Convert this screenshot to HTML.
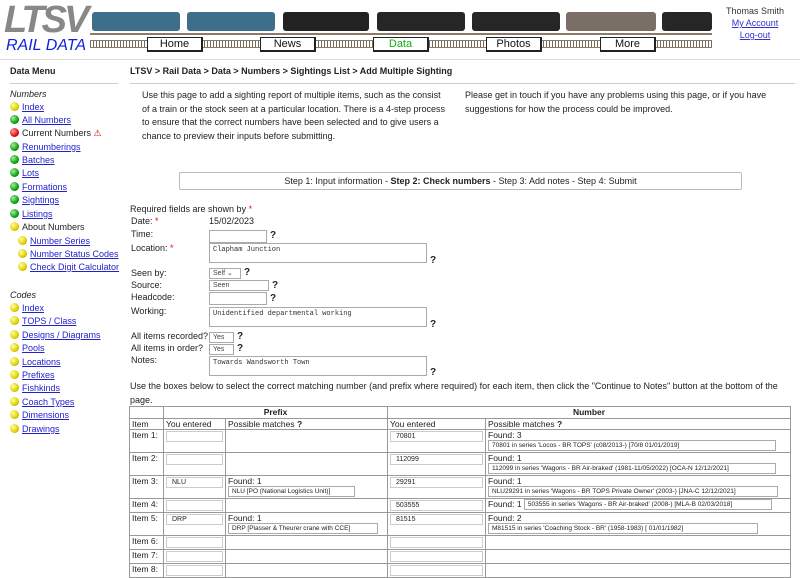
<!DOCTYPE html><html><head><meta charset="utf-8"><style>
*{box-sizing:border-box}
body{margin:0;width:800px;height:575px;overflow:hidden;background:#fff;font-family:"Liberation Sans",Arial,sans-serif;font-size:9px;color:#222;position:relative}
.a{position:absolute}
a{color:#22c}
.tab{position:absolute;top:37px;height:15px;width:56px;background:#fff;border:1px solid #222;border-right:2px solid #222;border-bottom:2px solid #222;font-size:11px;text-align:center;line-height:12px;color:#111}
.track{position:absolute;top:40px;height:8px;background:repeating-linear-gradient(90deg,#7a6a5a 0 1px,#fff 1px 3px);border-top:1px solid #8a7a6a;border-bottom:1px solid #8a7a6a}
.car{position:absolute;top:12px;height:19px;border-radius:3px}
.wh{position:absolute;top:31px;height:4px;background:#5a4a3a}
.side div{position:absolute;left:10px;white-space:nowrap}
.dot{display:inline-block;width:9px;height:9px;border-radius:50%;margin-right:3px;vertical-align:-1px}
.y{background:radial-gradient(circle at 35% 35%,#ffffa0,#e0d000 60%,#887000)}
.g{background:radial-gradient(circle at 35% 35%,#a0f0a0,#10a010 60%,#005000)}
.r{background:radial-gradient(circle at 35% 35%,#ffa0a0,#e01010 60%,#700000)}
.lbl{position:absolute;left:131px;white-space:nowrap}
.in{position:absolute;border:1px solid #aaa;background:#fff;height:13px}
.ta{position:absolute;border:1px solid #aaa;background:#fff;height:20px;font-family:"Liberation Mono",monospace;font-size:7px;padding:2px 3px;color:#333}
.sel{position:absolute;border:1px solid #aaa;background:#fff;height:11px;font-size:7px;line-height:9px;padding-left:3px;color:#444}
.q{position:absolute;font-weight:bold;font-size:10px}
table{position:absolute;left:129px;top:406px;border-collapse:collapse;width:662px;font-size:8.5px;table-layout:fixed}
td,th{border:1px solid #999;padding:0 2px;vertical-align:top;line-height:10px;white-space:nowrap;overflow:hidden}
th{font-weight:bold;text-align:center;height:12px}
.bx{border:1px solid #ccc;height:11px;margin:1px 0;font-size:7px;padding-left:5px;line-height:9px}
.s2{border:1px solid #aaa;font-size:6.5px;height:11px;line-height:9px;padding-left:3px;display:inline-block;margin-bottom:1px;overflow:hidden;vertical-align:top}
</style></head><body>
<div class="a" style="left:4px;top:2px;font:bold italic 38px 'Liberation Sans',sans-serif;color:#888;letter-spacing:-3px;line-height:36px">LTSV</div>
<div class="a" style="left:6px;top:37px;font:italic 16px 'Liberation Sans',sans-serif;color:#1020e0">RAIL DATA</div>
<div class="car" style="left:92px;width:88px;background:#3d6f8a"></div>
<div class="car" style="left:187px;width:88px;background:#3d6f8a"></div>
<div class="car" style="left:283px;width:86px;background:#222"></div>
<div class="car" style="left:377px;width:88px;background:#262626"></div>
<div class="car" style="left:472px;width:88px;background:#262626"></div>
<div class="car" style="left:566px;width:90px;background:#7b6e66"></div>
<div class="car" style="left:662px;width:50px;background:#262626"></div>
<div class="wh" style="left:90px;width:622px;height:2px;top:33px;background:#8a7a6a"></div>
<div class="track" style="left:90px;width:622px"></div>
<div class="tab" style="left:147px">Home</div>
<div class="tab" style="left:260px">News</div>
<div class="tab" style="left:373px;color:#10b010">Data</div>
<div class="tab" style="left:486px">Photos</div>
<div class="tab" style="left:600px">More</div>
<div class="a" style="left:700px;width:110px;top:5px;text-align:center;line-height:12px;color:#333">Thomas Smith<br><a href="#" style="color:#33c">My Account</a><br><a href="#" style="color:#33c">Log-out</a></div>
<div class="a" style="left:0;top:59px;width:800px;height:1px;background:#ddd"></div>
<div class="side">
<div style="top:66px;font-weight:bold">Data Menu</div>
<div style="top:83px;width:108px;height:1px;background:#ccc"></div>
<div style="top:89px;font-style:italic">Numbers</div>
<div style="top:102px"><span class="dot y"></span><a href="#">Index</a></div>
<div style="top:115px"><span class="dot g"></span><a href="#">All Numbers</a></div>
<div style="top:128px"><span class="dot r"></span>Current Numbers <span style="color:#c00;font-size:9px">⚠</span></div>
<div style="top:142px"><span class="dot g"></span><a href="#">Renumberings</a></div>
<div style="top:155px"><span class="dot g"></span><a href="#">Batches</a></div>
<div style="top:168px"><span class="dot g"></span><a href="#">Lots</a></div>
<div style="top:182px"><span class="dot g"></span><a href="#">Formations</a></div>
<div style="top:195px"><span class="dot g"></span><a href="#">Sightings</a></div>
<div style="top:209px"><span class="dot g"></span><a href="#">Listings</a></div>
<div style="top:222px"><span class="dot y"></span>About Numbers</div>
<div style="top:236px;left:18px"><span class="dot y"></span><a href="#">Number Series</a></div>
<div style="top:249px;left:18px"><span class="dot y"></span><a href="#">Number Status Codes</a></div>
<div style="top:262px;left:18px"><span class="dot y"></span><a href="#">Check Digit Calculator</a></div>
<div style="top:290px;font-style:italic">Codes</div>
<div style="top:303px"><span class="dot y"></span><a href="#">Index</a></div>
<div style="top:316px"><span class="dot y"></span><a href="#">TOPS / Class</a></div>
<div style="top:330px"><span class="dot y"></span><a href="#">Designs / Diagrams</a></div>
<div style="top:343px"><span class="dot y"></span><a href="#">Pools</a></div>
<div style="top:357px"><span class="dot y"></span><a href="#">Locations</a></div>
<div style="top:370px"><span class="dot y"></span><a href="#">Prefixes</a></div>
<div style="top:383px"><span class="dot y"></span><a href="#">Fishkinds</a></div>
<div style="top:397px"><span class="dot y"></span><a href="#">Coach Types</a></div>
<div style="top:410px"><span class="dot y"></span><a href="#">Dimensions</a></div>
<div style="top:424px"><span class="dot y"></span><a href="#">Drawings</a></div>
</div>
<div class="a" style="left:130px;top:66px;font-weight:bold">LTSV &gt; Rail Data &gt; Data &gt; Numbers &gt; Sightings List &gt; Add Multiple Sighting</div>
<div class="a" style="left:130px;top:83px;width:665px;height:1px;background:#ccc"></div>
<div class="a" style="left:142px;top:89px;width:305px;line-height:13.5px">Use this page to add a sighting report of multiple items, such as the consist of a train or the stock seen at a particular location. There is a 4-step process to ensure that the correct numbers have been selected and to give users a chance to preview their inputs before submitting.</div>
<div class="a" style="left:465px;top:89px;width:310px;line-height:13.5px">Please get in touch if you have any problems using this page, or if you have suggestions for how the process could be improved.</div>
<div class="a" style="left:179px;top:172px;width:563px;height:18px;border:1px solid #bbb;border-radius:2px;text-align:center;line-height:16px">Step 1: Input information - <b>Step 2: Check numbers</b> - Step 3: Add notes - Step 4: Submit</div>
<div class="lbl" style="top:204px;left:130px">Required fields are shown by <span style="color:red">*</span></div>
<div class="lbl" style="top:216px">Date: <span style="color:red">*</span></div><div class="a" style="left:209px;top:216px">15/02/2023</div>
<div class="lbl" style="top:229px">Time:</div><div class="in" style="left:209px;top:230px;width:58px"></div><div class="q" style="left:270px;top:230px">?</div>
<div class="lbl" style="top:243px">Location: <span style="color:red">*</span></div><div class="ta" style="left:209px;top:243px;width:218px">Clapham Junction</div><div class="q" style="left:430px;top:255px">?</div>
<div class="lbl" style="top:268px">Seen by:</div><div class="sel" style="left:209px;top:268px;width:32px">Self ⌄</div><div class="q" style="left:244px;top:267px">?</div>
<div class="lbl" style="top:280px">Source:</div><div class="sel" style="left:209px;top:280px;width:60px">Seen</div><div class="q" style="left:272px;top:280px">?</div>
<div class="lbl" style="top:292px">Headcode:</div><div class="in" style="left:209px;top:292px;width:58px"></div><div class="q" style="left:270px;top:293px">?</div>
<div class="lbl" style="top:306px">Working:</div><div class="ta" style="left:209px;top:307px;width:218px">Unidentified departmental working</div><div class="q" style="left:430px;top:319px">?</div>
<div class="lbl" style="top:331px">All items recorded?</div><div class="sel" style="left:209px;top:332px;width:25px">Yes</div><div class="q" style="left:237px;top:331px">?</div>
<div class="lbl" style="top:343px">All items in order?</div><div class="sel" style="left:209px;top:344px;width:25px">Yes</div><div class="q" style="left:237px;top:343px">?</div>
<div class="lbl" style="top:355px">Notes:</div><div class="ta" style="left:209px;top:356px;width:218px">Towards Wandsworth Town</div><div class="q" style="left:430px;top:367px">?</div>
<div class="a" style="left:130px;top:380px;width:660px;line-height:13.5px">Use the boxes below to select the correct matching number (and prefix where required) for each item, then click the "Continue to Notes" button at the bottom of the page.</div>
<table>
<colgroup><col style="width:34px"><col style="width:62px"><col style="width:162px"><col style="width:98px"><col></colgroup>
<tr><th></th><th colspan="2">Prefix</th><th colspan="2">Number</th></tr>
<tr><td>Item</td><td>You entered</td><td>Possible matches <b>?</b></td><td>You entered</td><td>Possible matches <b>?</b></td></tr>
<tr style="height:23px"><td>Item 1:</td><td><div class="bx"></div></td><td></td><td><div class="bx">70801</div></td><td>Found: 3<br><span class="s2" style="width:288px">70801 in series 'Locos - BR TOPS' (c08/2013-) [70/8 01/01/2019]</span></td></tr>
<tr style="height:23px"><td>Item 2:</td><td><div class="bx"></div></td><td></td><td><div class="bx">112099</div></td><td>Found: 1<br><span class="s2" style="width:288px">112099 in series 'Wagons - BR Air-braked' (1981-11/05/2022) [OCA-N 12/12/2021]</span></td></tr>
<tr style="height:23px"><td>Item 3:</td><td><div class="bx">NLU</div></td><td>Found: 1<br><span class="s2" style="width:127px">NLU [PO (National Logistics Unit)]</span></td><td><div class="bx">29291</div></td><td>Found: 1<br><span class="s2" style="width:290px">NLU29291 in series 'Wagons - BR TOPS Private Owner' (2003-) [JNA-C 12/12/2021]</span></td></tr>
<tr style="height:14px"><td>Item 4:</td><td><div class="bx"></div></td><td></td><td><div class="bx">503555</div></td><td>Found: 1 <span class="s2" style="width:248px;margin:0">503555 in series 'Wagons - BR Air-braked' (2008-) [MLA-B 02/03/2018]</span></td></tr>
<tr style="height:23px"><td>Item 5:</td><td><div class="bx">DRP</div></td><td>Found: 1<br><span class="s2" style="width:150px">DRP [Plasser &amp; Theurer crane with CCE]</span></td><td><div class="bx">81515</div></td><td>Found: 2<br><span class="s2" style="width:270px">M81515 in series 'Coaching Stock - BR' (1958-1983) [ 01/01/1982]</span></td></tr>
<tr style="height:14px"><td>Item 6:</td><td><div class="bx"></div></td><td></td><td><div class="bx"></div></td><td></td></tr>
<tr style="height:14px"><td>Item 7:</td><td><div class="bx"></div></td><td></td><td><div class="bx"></div></td><td></td></tr>
<tr style="height:14px"><td>Item 8:</td><td><div class="bx"></div></td><td></td><td><div class="bx"></div></td><td></td></tr>
</table>
</body></html>
